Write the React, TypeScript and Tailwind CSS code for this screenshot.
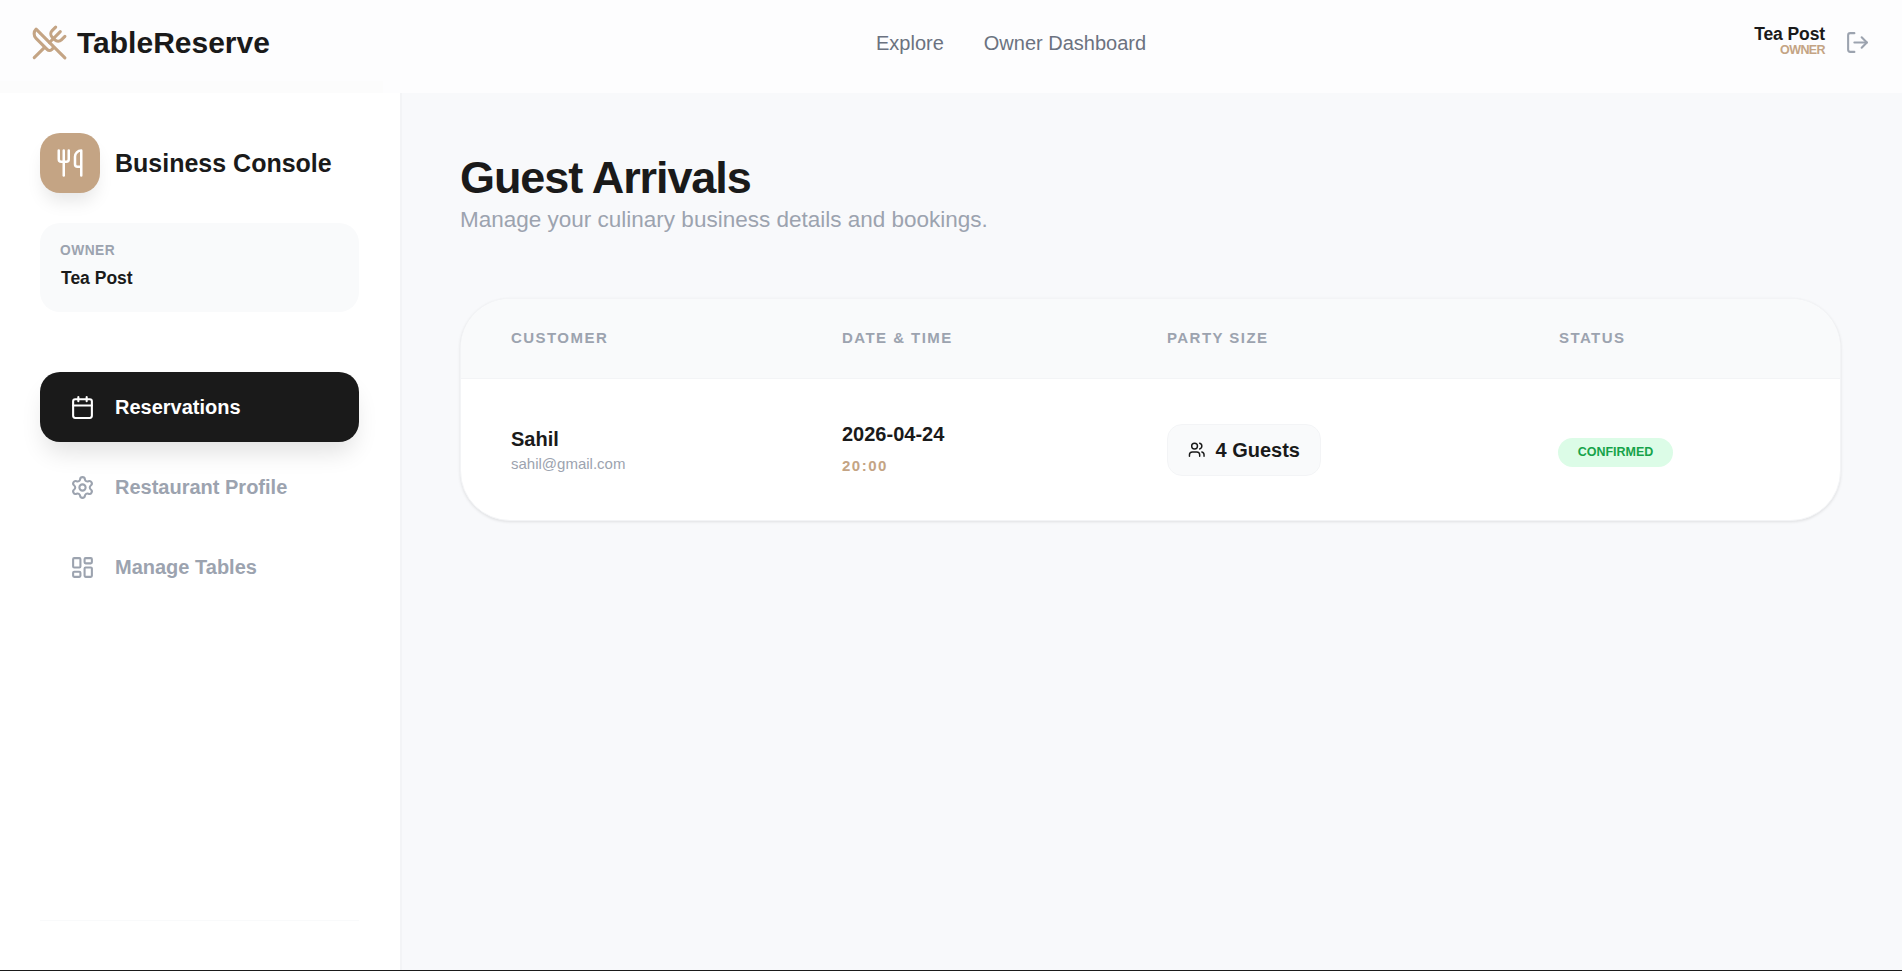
import { Calendar, LayoutDashboard, LogOut, Settings, Users, Utensils, UtensilsCrossed } from "lucide-react";

function Th({ className, children }: { className: string; children: React.ReactNode }) {
  return <div className={`text-[15px] font-bold tracking-[1.45px] text-[#9ca3af] ${className}`}>{children}</div>;
}

export default function App() {
  return (
    <div className="flex h-screen flex-col overflow-hidden bg-[#f8f9fb] font-['Liberation_Sans',Arial,sans-serif] text-[#1a1a1a]">
      <header className="relative flex h-[93px] shrink-0 items-center justify-between bg-[#fdfdfe] pb-[8px] pl-[31px] pr-[32px]">
        <div className="flex items-center gap-[9px]">
          <UtensilsCrossed className="h-[37px] w-[37px] text-[#c4a484]" strokeWidth={2} />
          <span className="text-[30px] font-bold leading-none">TableReserve</span>
        </div>
        <nav className="absolute left-[876px] top-0 flex h-[85px] items-center gap-[40px] text-[20px] text-[#6b7280]">
          <span>Explore</span>
          <span>Owner Dashboard</span>
        </nav>
        <div className="flex items-center gap-[20px]">
          <div className="-mt-[4px] flex flex-col items-end">
            <span className="text-[17.5px] font-bold leading-[20px] tracking-[-0.1px]">Tea Post</span>
            <span className="text-[12.5px] font-bold leading-[13px] tracking-[-0.6px] text-[#c4a484]">OWNER</span>
          </div>
          <LogOut className="h-[25px] w-[25px] text-[#9ca3af]" strokeWidth={2} />
        </div>
        <div className="absolute bottom-0 left-0 h-[12px] w-[383px] bg-[#fcfcfc]" />
      </header>
      <div className="flex min-h-0 flex-1">
        <aside className="flex w-[402px] shrink-0 flex-col border-r-2 border-[#f3f4f6] bg-white pl-[40px] pr-[41px] pt-[40px]">
          <div className="flex items-center gap-[15px]">
            <div className="flex h-[60px] w-[60px] items-center justify-center rounded-[20px] bg-[#c4a484] shadow-[0_12px_18px_-4px_rgba(0,0,0,0.1)]">
              <Utensils className="h-[30px] w-[30px] text-white" strokeWidth={2} />
            </div>
            <span className="pt-[2px] text-[25px] font-bold">Business Console</span>
          </div>
          <div className="mt-[30px] h-[89px] rounded-[20px] bg-[#f9fafb] px-[20px] pt-[20px]">
            <div className="text-[13.75px] font-bold leading-[16px] tracking-[0.5px] text-[#9ca3af]">OWNER</div>
            <div className="mt-[8px] pl-[1px] text-[17.5px] font-bold leading-[22px]">Tea Post</div>
          </div>
          <div className="mt-[60px] flex flex-col gap-[10px]">
            <div className="flex h-[70px] items-center gap-[20px] rounded-[20px] bg-[#1a1a1a] px-[30px] text-white shadow-[0_15px_25px_-5px_rgba(0,0,0,0.12)]">
              <Calendar className="h-[25px] w-[25px]" strokeWidth={2} />
              <span className="pb-[1px] text-[20px] font-bold">Reservations</span>
            </div>
            <div className="flex h-[70px] items-center gap-[20px] px-[30px] text-[#9ca3af]">
              <Settings className="h-[25px] w-[25px]" strokeWidth={2} />
              <span className="pb-[1px] text-[20px] font-bold">Restaurant Profile</span>
            </div>
            <div className="flex h-[70px] items-center gap-[20px] px-[30px] text-[#9ca3af]">
              <LayoutDashboard className="h-[25px] w-[25px]" strokeWidth={2} />
              <span className="pb-[1px] text-[20px] font-bold">Manage Tables</span>
            </div>
          </div>
          <div className="mb-[49px] mt-auto h-px bg-[#f9fafb]" />
        </aside>
        <main className="flex-1 pl-[58px] pr-[61px] pt-[60px]">
          <h1 className="text-[45px] font-bold leading-[50px] tracking-[-1.1px]">Guest Arrivals</h1>
          <p className="mt-[2px] text-[22.5px] leading-[30px] text-[#9ca3af]">Manage your culinary business details and bookings.</p>
          <div className="mt-[63px] overflow-hidden rounded-[50px] border border-[#f3f4f6] bg-white shadow-[0_1px_3px_rgba(0,0,0,0.1)]">
            <div className="flex h-[80px] items-center border-b border-[#f3f4f6] bg-[#f9fafb] pl-[50px]">
              <Th className="w-[331px]">CUSTOMER</Th>
              <Th className="w-[325px]">DATE &amp; TIME</Th>
              <Th className="w-[392px]">PARTY SIZE</Th>
              <Th className="">STATUS</Th>
            </div>
            <div className="flex h-[141px] items-center pl-[50px]">
              <div className="w-[331px] pt-[2px]">
                <div className="text-[20px] font-bold leading-[25px]">Sahil</div>
                <div className="mt-[2px] text-[15px] leading-[20px] text-[#9ca3af]">sahil@gmail.com</div>
              </div>
              <div className="w-[325px] pb-[2px]">
                <div className="text-[20px] font-bold leading-[25px]">2026-04-24</div>
                <div className="mt-[9px] text-[15px] font-bold leading-[20px] tracking-[1.5px] text-[#c4a484]">20:00</div>
              </div>
              <div className="w-[391px]">
                <div className="flex h-[52px] w-[154px] items-center gap-[10px] rounded-[15px] border border-[#f3f4f6] bg-[#f9fafb] pl-[20px] text-[20px] font-bold">
                  <Users className="h-[17.5px] w-[17.5px]" strokeWidth={2} />
                  <span>4 Guests</span>
                </div>
              </div>
              <div className="mt-[5px] flex h-[29px] w-[115px] items-center justify-center rounded-full bg-[#dcfce7] text-[12.5px] font-bold text-[#16a34a]">CONFIRMED</div>
            </div>
          </div>
        </main>
      </div>
      <div className="h-px shrink-0 bg-[#1a1a1a]" />
    </div>
  );
}
